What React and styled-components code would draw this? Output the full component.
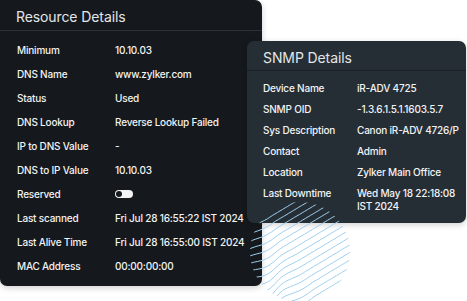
import React from "react"
import styled, { createGlobalStyle } from "styled-components"

const Global = createGlobalStyle`
  body {
    margin: 0;
    background: #fff;
    font-family: Inter, "Noto Sans", sans-serif;
  }
`

const Stage = styled.div`
  position: relative;
  width: 467px;
  height: 301px;
  overflow: hidden;
  background: #fff;
`

const Card = styled.section`
  background: ${(p) => p.bg};
  color: #f2f3f4;
  border-radius: 7px;
  box-shadow: 0 2px 6px rgba(0, 0, 0, 0.18);
`

const ResourceCard = styled(Card)`
  width: 262px;
  height: 286px;
  box-sizing: border-box;
  border-top-left-radius: 0;
`

const SnmpCard = styled(Card)`
  position: absolute;
  left: 247px;
  top: 41px;
  width: 219px;
  height: 182px;
  box-sizing: border-box;
`

const Title = styled.h2`
  margin: 0;
  height: ${(p) => p.h}px;
  display: flex;
  align-items: center;
  padding: 3px 0 0 ${(p) => p.pad}px;
  font-size: 14px;
  font-weight: 400;
  letter-spacing: -0.1px;
  color: #e3e6e8;
  border-bottom: 1px solid ${(p) => p.line};
  box-sizing: border-box;
`

const Rows = styled.div`
  display: flex;
  flex-direction: column;
  padding: ${(p) => p.top}px 0 0 ${(p) => p.pad}px;
`

const Row = styled.div`
  display: flex;
  align-items: flex-start;
  padding: ${(p) => p.gap}px 0;
  font-size: 10px;
  font-weight: 500;
  letter-spacing: -0.2px;
  line-height: ${(p) => p.lh}px;
`

const Label = styled.span`
  flex: 0 0 ${(p) => p.w}px;
`

const Value = styled.span`
  max-width: ${(p) => p.max || 200}px;
`

const Toggle = styled.span`
  display: inline-flex;
  align-items: center;
  margin-top: 3px;
  width: 18px;
  height: 8px;
  border-radius: 4px;
  background: #f4f4f4;
  padding: 0 1px;
  box-sizing: border-box;
  &::before {
    content: "";
    width: 6px;
    height: 6px;
    border-radius: 50%;
    background: #15191d;
  }
`

const Waves = styled.svg`
  position: absolute;
  left: 230px;
  top: 190px;
  pointer-events: none;
`

const resource = [
  ["Minimum", "10.10.03"],
  ["DNS Name", "www.zylker.com"],
  ["Status", "Used"],
  ["DNS Lookup", "Reverse Lookup Failed"],
  ["IP to DNS Value", "-"],
  ["DNS to IP Value", "10.10.03"],
  ["Reserved", null],
  ["Last scanned", "Fri Jul 28 16:55:22 IST 2024"],
  ["Last Alive Time", "Fri Jul 28 16:55:00 IST 2024"],
  ["MAC Address", "00:00:00:00"],
]

const snmp = [
  ["Device Name", "iR-ADV 4725"],
  ["SNMP OID", "-1.3.6.1.5.1.1603.5.7"],
  ["Sys Description", "Canon iR-ADV 4726/P"],
  ["Contact", "Admin"],
  ["Location", "Zylker Main Office"],
  ["Last Downtime", "Wed May 18 22:18:08 IST 2024"],
]

// diagonal contour lines, wobbly on the left side, clipped to a circle
function wavePaths() {
  const cx = 70
  const cy = 62
  const dx = Math.cos(-0.54)
  const dy = Math.sin(-0.54)
  const nx = -dy
  const ny = dx
  const out = []
  for (let k = -8; k <= 8; k++) {
    const pts = []
    for (let t = -80; t <= 80; t += 3) {
      const w = Math.max(0, (-t - 5) / 50)
      const off = k * 6.5 + Math.sin(t * 0.13 + k * 0.6) * 3.6 * w
      const x = cx + dx * t + nx * off
      const y = cy + dy * t + ny * off
      pts.push(`${x.toFixed(1)},${y.toFixed(1)}`)
    }
    out.push("M" + pts.join(" L"))
  }
  return out
}

export default function App() {
  const paths = wavePaths()
  return (
    <Stage>
      <Global />
      <ResourceCard bg="#15191d">
        <Title h={31} pad={16} line="#2b3136">
          Resource Details
        </Title>
        <Rows top={7} pad={17}>
          {resource.map(([k, v]) => (
            <Row key={k} gap={5} lh={14}>
              <Label w={98}>{k}</Label>
              {v === null ? <Toggle /> : <Value>{v}</Value>}
            </Row>
          ))}
        </Rows>
      </ResourceCard>

      <SnmpCard bg="#252e34">
        <Title h={30} pad={16} line="#1a2025">
          SNMP Details
        </Title>
        <Rows top={7} pad={16}>
          {snmp.map(([k, v]) => (
            <Row key={k} gap={4} lh={13}>
              <Label w={94}>{k}</Label>
              <Value max={104}>{v}</Value>
            </Row>
          ))}
        </Rows>
      </SnmpCard>

      <Waves width="140" height="111" viewBox="0 0 140 111">
        <defs>
          <clipPath id="blob">
            <circle cx="70" cy="62" r="50" />
          </clipPath>
        </defs>
        <g clipPath="url(#blob)" fill="none" stroke="#9fcfee" strokeWidth="1">
          {paths.map((d, i) => (
            <path key={i} d={d} />
          ))}
        </g>
      </Waves>
    </Stage>
  )
}
